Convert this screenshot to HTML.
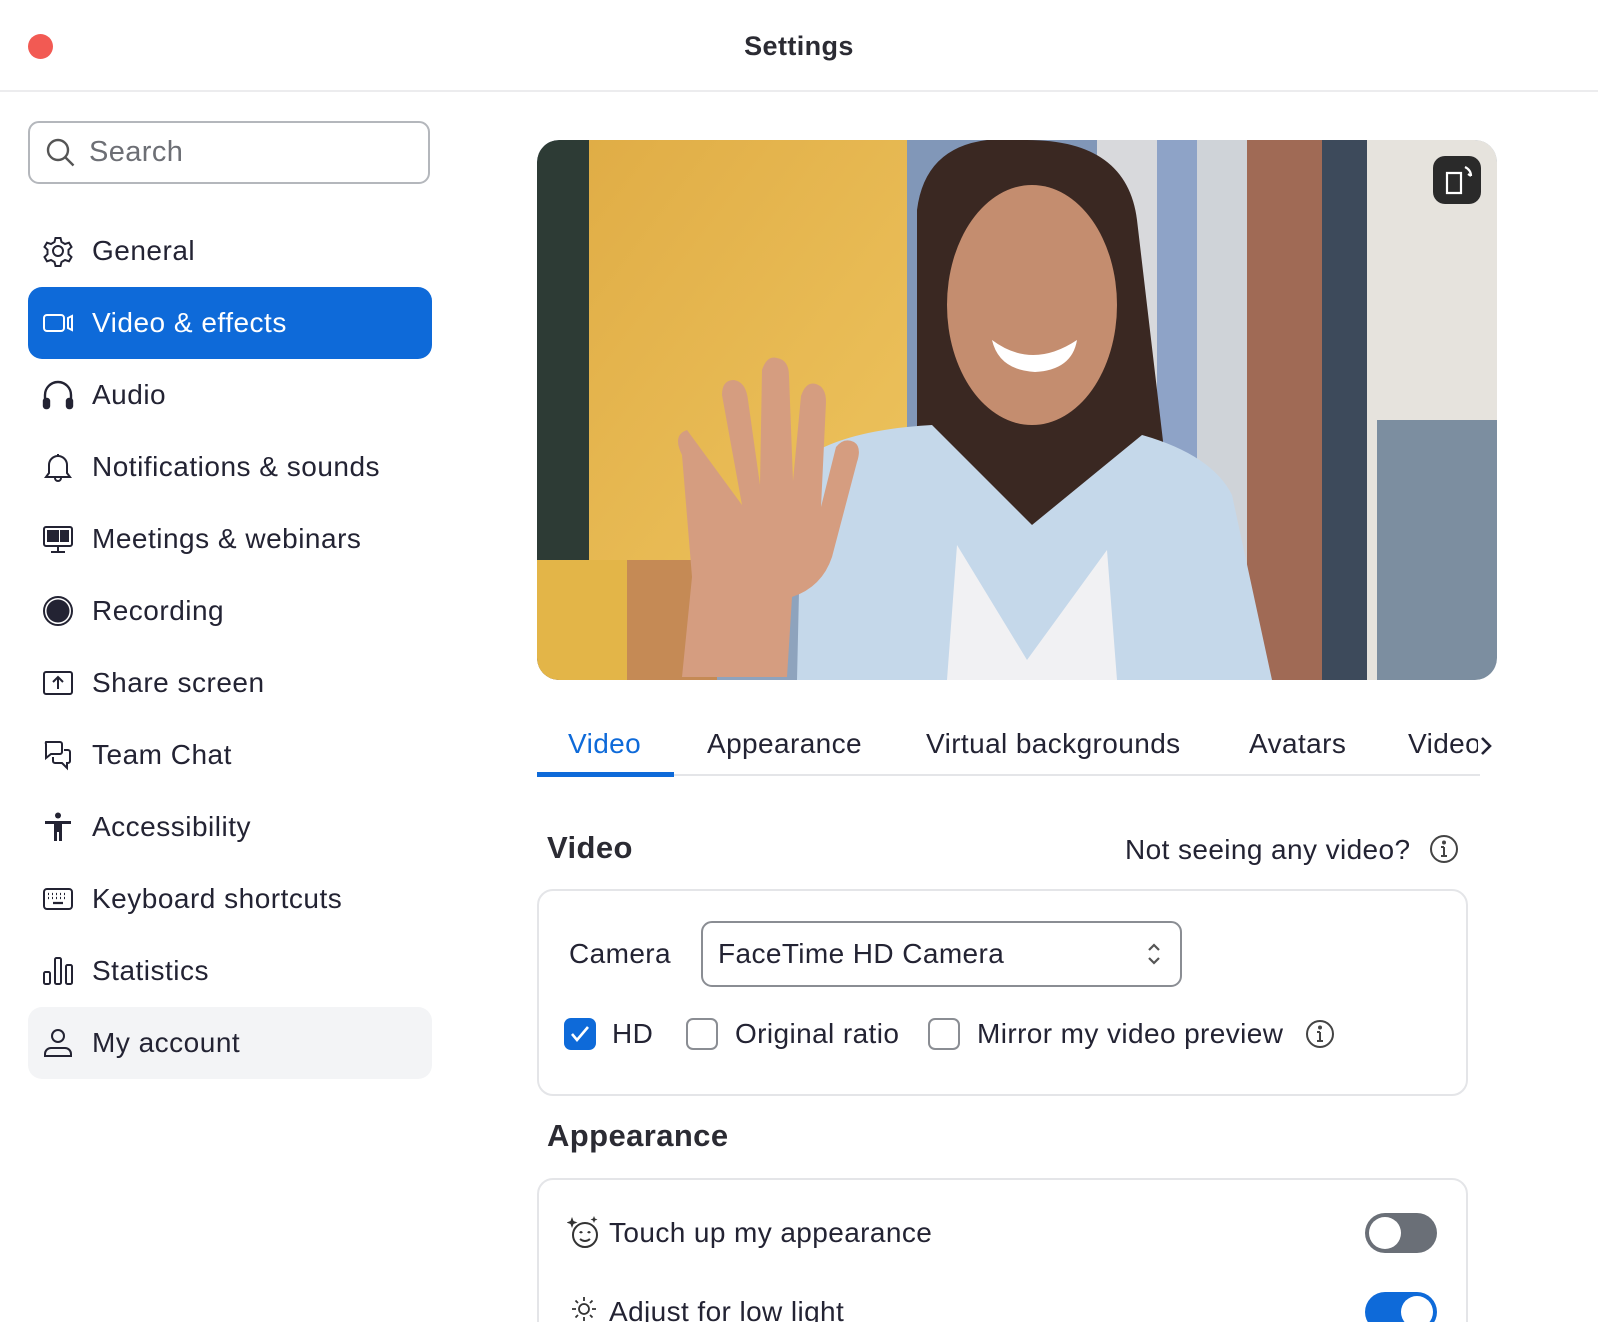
<!DOCTYPE html>
<html><head><meta charset="utf-8">
<style>
*{box-sizing:border-box;margin:0;padding:0}
html,body{width:1598px;height:1322px;overflow:hidden}
body{background:#fff;font-family:"Liberation Sans",sans-serif;color:#232333;position:relative}
.abs{position:absolute}
.nav{position:absolute;left:28px;width:404px;height:72px;border-radius:14px;display:flex;align-items:center;font-size:28px;letter-spacing:0.5px}
.nav svg{position:absolute;left:14px;top:20px;width:32px;height:32px}
.nav span{position:absolute;left:64px}
.t{position:absolute;white-space:nowrap;letter-spacing:0.4px}
.cb{position:absolute;width:32px;height:32px;border:2px solid #8a8d93;border-radius:7px;top:1018px}
</style></head><body>
<div class="abs" style="left:28px;top:34px;width:25px;height:25px;border-radius:50%;background:#f25a53"></div>
<div class="t" style="left:0;width:1598px;text-align:center;top:31px;font-size:27px;font-weight:bold;color:#2b2b33">Settings</div>
<div class="abs" style="left:0;top:90px;width:1598px;height:2px;background:#ececee"></div>

<div class="abs" style="left:28px;top:121px;width:402px;height:63px;border:2px solid #b4b7bc;border-radius:11px"></div>
<svg class="abs" style="left:45px;top:137px" width="32" height="32" viewBox="0 0 32 32" fill="none" stroke="#555" stroke-width="2.4"><circle cx="13" cy="13" r="10"/><path d="M20.5 20.5l8 8"/></svg>
<div class="t" style="left:89px;top:136px;font-size:29px;color:#6d6f75">Search</div>

<div class="nav" style="top:215px"><svg viewBox="0 0 32 32" fill="none" stroke="#232333" stroke-width="2"><circle cx="16" cy="16" r="5"/><path d="M13.5 3h5l1 4 3.5 2 4-1.3 2.5 4.3-3 2.8v4.4l3 2.8-2.5 4.3-4-1.3-3.5 2-1 4h-5l-1-4-3.5-2-4 1.3L2.5 22l3-2.8v-4.4l-3-2.8L5 7.7l4 1.3 3.5-2z"/></svg><span>General</span></div>
<div class="nav" style="top:287px;background:#0e6ad9;color:#fff"><svg viewBox="0 0 32 32" fill="none" stroke="#fff" stroke-width="2"><rect x="2" y="8" width="20" height="16" rx="3"/><path d="M26 11l4-2v14l-4-2z"/></svg><span>Video &amp; effects</span></div>
<div class="nav" style="top:359px"><svg viewBox="0 0 32 32" fill="none" stroke="#232333" stroke-width="2.4"><path d="M3 24v-8a13 13 0 0126 0v8"/><rect x="2" y="20" width="5" height="9" rx="2" fill="#232333"/><rect x="25" y="20" width="5" height="9" rx="2" fill="#232333"/></svg><span>Audio</span></div>
<div class="nav" style="top:431px"><svg viewBox="0 0 32 32" fill="none" stroke="#232333" stroke-width="2"><path d="M16 3v2M7 22v-8a9 9 0 0118 0v8l3 4H4z"/><path d="M13 27a3 3 0 006 0"/></svg><span>Notifications &amp; sounds</span></div>
<div class="nav" style="top:503px"><svg viewBox="0 0 32 32" fill="none" stroke="#232333" stroke-width="2"><rect x="2" y="4" width="28" height="19" rx="2"/><path d="M16 23v5M9 29h14"/><rect x="6" y="8" width="4" height="4" fill="#232333"/><rect x="12" y="8" width="4" height="4" fill="#232333"/><rect x="6" y="14" width="4" height="4" fill="#232333"/><rect x="12" y="14" width="4" height="4" fill="#232333"/><rect x="19" y="8" width="7" height="10" fill="#232333"/></svg><span>Meetings &amp; webinars</span></div>
<div class="nav" style="top:575px"><svg viewBox="0 0 32 32"><circle cx="16" cy="16" r="14" fill="none" stroke="#232333" stroke-width="2"/><circle cx="16" cy="16" r="11.5" fill="#232333"/></svg><span>Recording</span></div>
<div class="nav" style="top:647px"><svg viewBox="0 0 32 32" fill="none" stroke="#232333" stroke-width="2"><rect x="2" y="5" width="28" height="22" rx="2"/><path d="M16 22V11M11 15l5-5 5 5"/></svg><span>Share screen</span></div>
<div class="nav" style="top:719px"><svg viewBox="0 0 32 32" fill="none" stroke="#232333" stroke-width="2"><path d="M4 3h14a2 2 0 012 2v8a2 2 0 01-2 2H9l-5 4V5a2 2 0 010-2z"/><path d="M22 11h4a2 2 0 012 2v9a2 2 0 01-2 2h-1v5l-5-5h-7a2 2 0 01-2-2v-4"/></svg><span>Team Chat</span></div>
<div class="nav" style="top:791px"><svg viewBox="0 0 32 32" fill="#232333"><circle cx="16" cy="4.5" r="3"/><path d="M3 10h26v3h-9v17h-3v-9h-2v9h-3V13H3z"/></svg><span>Accessibility</span></div>
<div class="nav" style="top:863px"><svg viewBox="0 0 32 32" fill="none" stroke="#232333" stroke-width="2"><rect x="2" y="6" width="28" height="20" rx="3"/><path d="M6 11h1M10 11h1M14 11h1M18 11h1M22 11h1M26 11h0M6 15h1M10 15h1M14 15h1M18 15h1M22 15h1M11 20h10" stroke-width="2.2"/></svg><span>Keyboard shortcuts</span></div>
<div class="nav" style="top:935px"><svg viewBox="0 0 32 32" fill="none" stroke="#232333" stroke-width="2"><rect x="2" y="17" width="6" height="12" rx="1.5"/><rect x="13" y="3" width="6" height="26" rx="1.5"/><rect x="24" y="10" width="6" height="19" rx="1.5"/></svg><span>Statistics</span></div>
<div class="nav" style="top:1007px;background:#f3f4f6"><svg viewBox="0 0 32 32" fill="none" stroke="#232333" stroke-width="2"><circle cx="16" cy="9" r="6"/><path d="M3 29v-2a6 6 0 016-6h14a6 6 0 016 6v2z"/></svg><span>My account</span></div>

<svg class="abs" style="left:537px;top:140px;border-radius:22px" width="960" height="540" viewBox="0 0 960 540">
<defs><clipPath id="c"><rect width="960" height="540" rx="22"/></clipPath>
<linearGradient id="y" x1="0" y1="0" x2="1" y2="1"><stop offset="0" stop-color="#e0ad46"/><stop offset="1" stop-color="#edc35d"/></linearGradient></defs>
<g clip-path="url(#c)">
<rect width="960" height="540" fill="#8ea3bd"/>
<rect x="0" width="55" height="540" fill="#2d3b35"/>
<rect x="52" width="318" height="420" fill="url(#y)"/>
<rect x="370" width="200" height="540" fill="#8197b8"/>
<rect x="560" width="60" height="540" fill="#d8d9dc"/>
<rect x="620" width="40" height="540" fill="#8ea3c7"/>
<rect x="660" width="50" height="540" fill="#cfd3d8"/>
<rect x="710" width="75" height="540" fill="#a06a55"/>
<rect x="785" width="45" height="540" fill="#3d4a5b"/>
<rect x="830" width="130" height="540" fill="#e6e3dd"/>
<rect x="840" y="280" width="120" height="260" fill="#7c8ea0"/>
<rect x="0" y="420" width="180" height="120" fill="#c58a55"/>
<rect x="0" y="420" width="90" height="120" fill="#e3b548"/>
<path d="M380 540V70q10-80 110-70 100 0 110 80l40 340-50 20v100z" fill="#3a2822"/>
<ellipse cx="495" cy="165" rx="85" ry="120" fill="#c48d6f"/>
<path d="M455 200q40 30 85 0q-5 30-42 32q-36-2-43-32z" fill="#fff"/>
<path d="M260 540l5-220q40-30 130-35l100 100 110-90q70 20 90 60l40 185z" fill="#c5d8ea"/>
<path d="M420 405l70 115 80-110 10 130H410z" fill="#f1f1f3"/>
<path d="M145 315q-10-20 5-25l55 75-20-110q0-15 12-15 12 2 14 20l12 85 2-115q5-15 15-12 12 2 12 18l4 105 8-85q5-15 15-12 10 3 10 18l-5 105 15-60q8-10 18-5 8 5 3 20l-25 95q-10 30-40 40l-5 80H145l10-100z" fill="#d59d80"/>
<rect x="896" y="16" width="48" height="48" rx="12" fill="#2a2a2a"/>
<path d="M910 33h14v20h-14zM928 27q6 3 6 9M934 36l-3-2" fill="none" stroke="#fff" stroke-width="2.2"/>
</g></svg>

<div class="t" style="left:568px;top:728px;font-size:28px;color:#0e6ad9">Video</div>
<div class="t" style="left:707px;top:728px;font-size:28px">Appearance</div>
<div class="t" style="left:926px;top:728px;font-size:28px">Virtual backgrounds</div>
<div class="t" style="left:1249px;top:728px;font-size:28px">Avatars</div>
<div class="t" style="left:1408px;top:728px;font-size:28px;width:70px;overflow:hidden">Video</div>
<svg class="abs" style="left:1478px;top:734px" width="16" height="24" viewBox="0 0 16 24" fill="none" stroke="#232333" stroke-width="2.6"><path d="M4 4l8 8-8 8"/></svg>
<div class="abs" style="left:537px;top:774px;width:943px;height:2px;background:#e4e5e8"></div>
<div class="abs" style="left:537px;top:772px;width:137px;height:5px;background:#0e6ad9"></div>

<div class="t" style="left:547px;top:830px;font-size:31px;font-weight:bold;color:#2b2b33">Video</div>
<div class="t" style="left:1125px;top:834px;font-size:28px">Not seeing any video?</div>
<svg class="abs" style="left:1429px;top:834px" width="30" height="30" viewBox="0 0 30 30" fill="none" stroke="#444" stroke-width="2"><circle cx="15" cy="15" r="13"/><path d="M15 13v9M12 22h6M12 13h3"/><circle cx="15" cy="8.5" r="1" fill="#444"/></svg>

<div class="abs" style="left:537px;top:889px;width:931px;height:207px;border:2px solid #e4e5e8;border-radius:16px"></div>
<div class="t" style="left:569px;top:938px;font-size:28px">Camera</div>
<div class="abs" style="left:701px;top:921px;width:481px;height:66px;border:2px solid #8a8d93;border-radius:11px"></div>
<div class="t" style="left:718px;top:938px;font-size:28px">FaceTime HD Camera</div>
<svg class="abs" style="left:1145px;top:940px" width="18" height="28" viewBox="0 0 18 28" fill="none" stroke="#555" stroke-width="2.2"><path d="M4 10l5-5 5 5M4 18l5 5 5-5"/></svg>

<div class="abs" style="left:564px;top:1018px;width:32px;height:32px;background:#0e6ad9;border-radius:7px"></div>
<svg class="abs" style="left:564px;top:1018px" width="32" height="32" viewBox="0 0 32 32" fill="none" stroke="#fff" stroke-width="2.6"><path d="M8 16l5 6 11-13"/></svg>
<div class="t" style="left:612px;top:1018px;font-size:28px">HD</div>
<div class="cb" style="left:686px"></div>
<div class="t" style="left:735px;top:1018px;font-size:28px">Original ratio</div>
<div class="cb" style="left:928px"></div>
<div class="t" style="left:977px;top:1018px;font-size:28px">Mirror my video preview</div>
<svg class="abs" style="left:1305px;top:1019px" width="30" height="30" viewBox="0 0 30 30" fill="none" stroke="#444" stroke-width="2"><circle cx="15" cy="15" r="13"/><path d="M15 13v9M12 22h6M12 13h3"/><circle cx="15" cy="8.5" r="1" fill="#444"/></svg>

<div class="t" style="left:547px;top:1118px;font-size:31px;font-weight:bold;color:#2b2b33">Appearance</div>
<div class="abs" style="left:537px;top:1178px;width:931px;height:200px;border:2px solid #e4e5e8;border-radius:16px"></div>
<svg class="abs" style="left:567px;top:1215px" width="34" height="36" viewBox="0 0 34 36" fill="none" stroke="#333" stroke-width="2"><circle cx="18" cy="20" r="12"/><path d="M13 18q1-2 2 0M21 18q1-2 2 0M13 24q5 4 10 0"/><path d="M5 2l1.5 4 4 1.5-4 1.5L5 13 3.5 9l-4-1.5 4-1.5z" fill="#333" stroke="none"/><path d="M27 1l1 2.5 2.5 1-2.5 1-1 2.5-1-2.5-2.5-1 2.5-1z" fill="#333" stroke="none"/></svg>
<div class="t" style="left:609px;top:1217px;font-size:28px">Touch up my appearance</div>
<div class="abs" style="left:1365px;top:1213px;width:72px;height:40px;border-radius:20px;background:#6a6f77"></div>
<div class="abs" style="left:1369px;top:1217px;width:32px;height:32px;border-radius:50%;background:#fff"></div>
<svg class="abs" style="left:570px;top:1295px" width="28" height="28" viewBox="0 0 28 28" fill="none" stroke="#333" stroke-width="1.8"><circle cx="14" cy="14" r="5"/><path d="M14 2v4M14 22v4M2 14h4M22 14h4M5.5 5.5l2.5 2.5M20 20l2.5 2.5M5.5 22.5L8 20M20 8l2.5-2.5"/></svg>
<div class="t" style="left:609px;top:1296px;font-size:28px">Adjust for low light</div>
<div class="abs" style="left:1365px;top:1292px;width:72px;height:40px;border-radius:20px;background:#0e6ad9"></div>
<div class="abs" style="left:1401px;top:1296px;width:32px;height:32px;border-radius:50%;background:#fff"></div>
</body></html>
